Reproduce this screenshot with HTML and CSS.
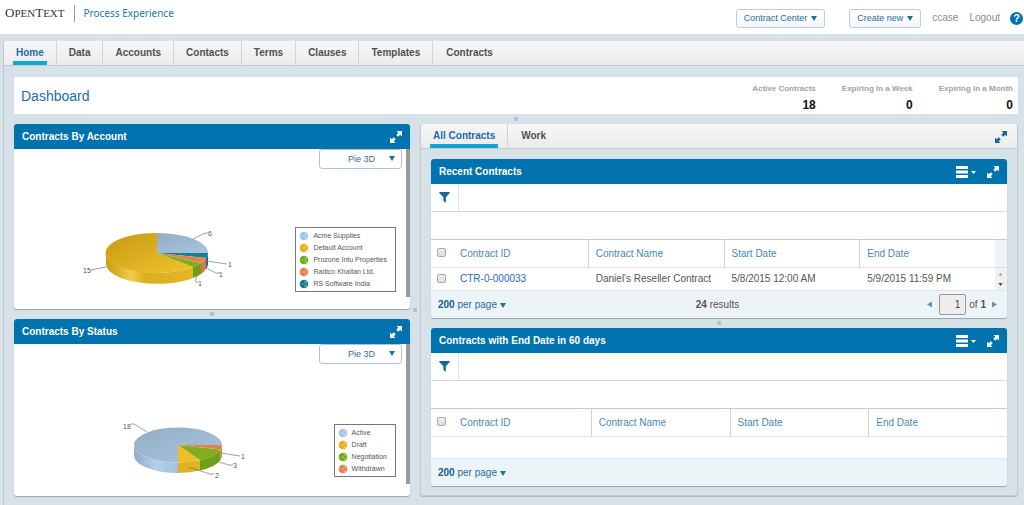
FILE: index.html
```html
<!DOCTYPE html>
<html lang="en">
<head>
<meta charset="utf-8">
<title>Process Experience - Dashboard</title>
<link rel="stylesheet" href="styles.css">
</head>
<body>
<svg class="defs" width="0" height="0" aria-hidden="true">
  <symbol id="expand" viewBox="0 0 12 12"><path d="M6.5 0H12V5.500L10.200 3.700L8.200 5.700L6.300 3.800L8.300 1.800ZM0 6.500L1.800 8.300L3.800 6.300L5.700 8.200L3.700 10.200L5.500 12H0Z" fill="currentColor"/></symbol>
  <symbol id="funnel" viewBox="0 0 12 12"><path d="M.3 0H11.700V1.200L7.500 5.800V11.600L4.800 9.800V5.800L.3 1.200Z" fill="currentColor"/></symbol>
  <symbol id="menu" viewBox="0 0 22 12"><path d="M0 0h12v3H0zM0 4.500h12v3H0zM0 9h12v3H0zM15 5h5l-2.500 3z" fill="currentColor"/></symbol>
  <symbol id="down" viewBox="0 0 6 5"><path d="M0 0h6L3 5z" fill="currentColor"/></symbol>
  <symbol id="dot" viewBox="0 0 10 10"><circle cx="5" cy="5" r="4.300" fill="currentColor"/><path d="M1.500 5h3.500M5 5L7.500 2M5 5l2.500 3M5 2a3 3 0 0 1 0 6" fill="none" stroke="#fff" stroke-width=".6" opacity=".5"/></symbol>
</svg>

<header class="topbar">
  <div class="logo">O<span>PEN</span>T<span>EXT</span></div>
  <div class="product">Process Experience</div>
  <div class="actions">
    <button class="pill" type="button">Contract Center <svg class="tri"><use href="#down"/></svg></button>
    <button class="pill pill-new" type="button">Create new <svg class="tri"><use href="#down"/></svg></button>
    <a href="#">ccase</a>
    <a href="#">Logout</a>
    <button class="help" type="button" aria-label="Help">?</button>
  </div>
</header>

<div class="frame">
  <nav class="tabs">
    <a class="active" href="#">Home</a><a href="#">Data</a><a href="#">Accounts</a><a href="#">Contacts</a><a href="#">Terms</a><a href="#">Clauses</a><a href="#">Templates</a><a href="#">Contracts</a>
  </nav>
  <main class="content">
    <section class="summary">
      <h1>Dashboard</h1>
      <dl>
        <div><dt>Active Contracts</dt><dd>18</dd></div>
        <div><dt>Expiring In a Week</dt><dd>0</dd></div>
        <div><dt>Expiring In a Month</dt><dd>0</dd></div>
      </dl>
    </section>
    <div class="split"></div>
    <div class="columns">
      <div class="charts">
        <section class="card">
          <header class="card-head"><h2>Contracts By Account</h2><button class="icon" type="button" aria-label="Expand"><svg><use href="#expand"/></svg></button></header>
          <div class="chart-body">
            <div class="chart-main">
              <div class="pick"><select aria-label="Chart type"><option>Pie 3D</option></select><svg class="tri"><use href="#down"/></svg></div>
              <div class="chart account">
                <svg class="pie-account" viewBox="80 222 170 74" role="img" aria-label="Contracts by account">
                  <defs>
                    <linearGradient id="goldSide"><stop offset="0" stop-color="#c99c16"/><stop offset=".3" stop-color="#f3cb48"/><stop offset=".45" stop-color="#d9ae20"/><stop offset="1" stop-color="#e3b722"/></linearGradient>
                    <linearGradient id="goldTop" x1="0" y1="0" x2="1" y2="1"><stop offset="0" stop-color="#c79915"/><stop offset="1" stop-color="#f0c42c"/></linearGradient>
                    <linearGradient id="blueTop" x1="0" y1="0" x2="1" y2="1"><stop offset="0" stop-color="#93adc7"/><stop offset="1" stop-color="#a9c4dd"/></linearGradient>
                    <linearGradient id="blueSide"><stop offset="0" stop-color="#8eabc5"/><stop offset=".5" stop-color="#b4d0e9"/><stop offset="1" stop-color="#a3c1dc"/></linearGradient>
                  </defs>
                  <path d="M106 253A51 20 0 0 0 193 267V278A51 20 0 0 1 106 264Z" fill="url(#goldSide)"/>
                  <path d="M193 267A51 20 0 0 0 201 263V274A51 20 0 0 1 193 278Z" fill="#6f9f14"/>
                  <path d="M201 263A51 20 0 0 0 206 258V269A51 20 0 0 1 201 274Z" fill="#d57b49"/>
                  <path d="M206 258A51 20 0 0 0 208 253V264A51 20 0 0 1 206 269Z" fill="#12717a"/>
                  <path d="M157 253V233A51 20 0 1 0 193 267Z" fill="url(#goldTop)"/>
                  <path d="M157 253V233A51 20 0 0 1 208 253Z" fill="url(#blueTop)"/>
                  <path d="M157 253H208A51 20 0 0 1 206 258Z" fill="#198088"/>
                  <path d="M157 253L206 258A51 20 0 0 1 201 263Z" fill="#dc8350"/>
                  <path d="M157 253L201 263A51 20 0 0 1 193 267Z" fill="#83ad1c"/>
                  <path d="M193 239L205 233H208M207 261L227 264M206 268L216 273H220M197 276L195 281L198 283M106 267L91 270" class="lead"/>
                  <text x="208" y="236">6</text><text x="228" y="267">1</text><text x="219" y="277">1</text><text x="198" y="286">1</text><text x="83" y="273">15</text>
                </svg>
                <ul class="legend">
                  <li><svg class="c-blue"><use href="#dot"/></svg>Acme Supplies</li>
                  <li><svg class="c-gold"><use href="#dot"/></svg>Default Account</li>
                  <li><svg class="c-green"><use href="#dot"/></svg>Prozone Intu Properties</li>
                  <li><svg class="c-orange"><use href="#dot"/></svg>Radico Khaitan Ltd.</li>
                  <li><svg class="c-teal"><use href="#dot"/></svg>RS Software India</li>
                </ul>
              </div>
            </div>
            <div class="rail"></div>
          </div>
        </section>
        <div class="split"></div>
        <section class="card">
          <header class="card-head"><h2>Contracts By Status</h2><button class="icon" type="button" aria-label="Expand"><svg><use href="#expand"/></svg></button></header>
          <div class="chart-body">
            <div class="chart-main">
              <div class="pick"><select aria-label="Chart type"><option>Pie 3D</option></select><svg class="tri"><use href="#down"/></svg></div>
              <div class="chart status">
                <svg class="pie-status" viewBox="100 413 160 75" role="img" aria-label="Contracts by status">
                  <path d="M134 445A44 17.500 0 0 0 178 462.500V473A44 17.500 0 0 1 134 455.500Z" fill="url(#blueSide)"/>
                  <path d="M178 462.500A44 17.500 0 0 0 200 460V470.500A44 17.500 0 0 1 178 473Z" fill="#e0b226"/>
                  <path d="M200 460A44 17.500 0 0 0 220.500 449.500V460A44 17.500 0 0 1 200 470.500Z" fill="#6f9f14"/>
                  <path d="M220.500 449.500A44 17.500 0 0 0 222 445V455.500A44 17.500 0 0 1 220.500 460Z" fill="#d57b49"/>
                  <path d="M178 445H222A44 17.500 0 1 0 178 462.500Z" fill="url(#blueTop)"/>
                  <path d="M178 445V462.500A44 17.500 0 0 0 200 460Z" fill="#f0be2d"/>
                  <path d="M178 445L200 460A44 17.500 0 0 0 220.500 449.500Z" fill="#83ad1c"/>
                  <path d="M178 445H222A44 17.500 0 0 1 220.500 449.500Z" fill="#df8450"/>
                  <path d="M131 424H134L147 432M221 453L240 456M219 462L229 465H233M188 467L210 474H214" class="lead"/>
                  <text x="123" y="429">18</text><text x="241" y="459">1</text><text x="233" y="468">3</text><text x="215" y="478">2</text>
                </svg>
                <ul class="legend">
                  <li><svg class="c-blue"><use href="#dot"/></svg>Active</li>
                  <li><svg class="c-gold"><use href="#dot"/></svg>Draft</li>
                  <li><svg class="c-green"><use href="#dot"/></svg>Negotiation</li>
                  <li><svg class="c-orange"><use href="#dot"/></svg>Withdrawn</li>
                </ul>
              </div>
            </div>
            <div class="rail"></div>
          </div>
        </section>
      </div>

      <div class="split split-v"></div>

      <section class="panel">
        <div class="tabs panel-tabs">
          <a class="active" href="#">All Contracts</a><a href="#">Work</a>
          <button class="icon" type="button" aria-label="Expand"><svg><use href="#expand"/></svg></button>
        </div>
        <div class="panel-body">
          <section class="card">
            <header class="card-head"><h2>Recent Contracts</h2><button class="icon menu" type="button" aria-label="Menu"><svg><use href="#menu"/></svg></button><button class="icon" type="button" aria-label="Expand"><svg><use href="#expand"/></svg></button></header>
            <div class="filter"><button class="icon" type="button" aria-label="Filter"><svg><use href="#funnel"/></svg></button></div>
            <div class="blank"></div>
            <table>
              <colgroup><col class="col-check"><col><col><col><col><col class="col-scroll"></colgroup>
              <thead><tr><th><input type="checkbox" aria-label="Select all"></th><th>Contract ID</th><th>Contract Name</th><th>Start Date</th><th>End Date</th><th class="scroll-top"></th></tr></thead>
              <tbody><tr><td><input type="checkbox" aria-label="Select CTR-0-000033"></td><td><a href="#">CTR-0-000033</a></td><td>Daniel's Reseller Contract</td><td>5/8/2015 12:00 AM</td><td>5/9/2015 11:59 PM</td><td class="scroller"><svg viewBox="0 0 11 20"><path d="M3.500 6.500h4L5.500 4z" fill="#999"/><path d="M3.500 14h4L5.500 17z" fill="#444"/></svg></td></tr></tbody>
            </table>
            <footer class="pager">
              <button class="per-page" type="button"><b>200</b> per page <svg class="tri"><use href="#down"/></svg></button>
              <span class="count"><b>24</b> results</span>
              <span class="pages">
                <button class="arrow" type="button" aria-label="Previous page"><svg viewBox="0 0 5 6"><path d="M5 0v6L0 3z" fill="currentColor"/></svg></button>
                <input type="text" value="1" aria-label="Page"><span>of <b>1</b></span>
                <button class="arrow" type="button" aria-label="Next page"><svg viewBox="0 0 5 6"><path d="M0 0v6L5 3z" fill="currentColor"/></svg></button>
              </span>
            </footer>
          </section>
          <div class="split"></div>
          <section class="card">
            <header class="card-head"><h2>Contracts with End Date in 60 days</h2><button class="icon menu" type="button" aria-label="Menu"><svg><use href="#menu"/></svg></button><button class="icon" type="button" aria-label="Expand"><svg><use href="#expand"/></svg></button></header>
            <div class="filter"><button class="icon" type="button" aria-label="Filter"><svg><use href="#funnel"/></svg></button></div>
            <div class="blank"></div>
            <table class="empty">
              <colgroup><col class="col-check"><col><col><col><col></colgroup>
              <thead><tr><th><input type="checkbox" aria-label="Select all"></th><th>Contract ID</th><th>Contract Name</th><th>Start Date</th><th>End Date</th></tr></thead>
              <tbody><tr><td colspan="5"></td></tr></tbody>
            </table>
            <footer class="pager">
              <button class="per-page" type="button"><b>200</b> per page <svg class="tri"><use href="#down"/></svg></button>
            </footer>
          </section>
        </div>
      </section>
    </div>
  </main>
</div>
</body>
</html>
```

FILE: styles.css
```css
* { box-sizing: border-box; }
body {
  margin: 0;
  background: #d7e1e8;
  color: #555;
  font: 10px/12px "Liberation Sans", Arial, sans-serif;
  overflow-x: hidden;
}
h1, h2, dl, dd, ul { margin: 0; padding: 0; }
a { text-decoration: none; color: inherit; }
button, input, select { font: inherit; margin: 0; }
button { background: none; border: 0; padding: 0; color: inherit; cursor: pointer; }
.defs { display: none; }
.tri { width: 6px; height: 5px; color: #1a6fa3; }

/* Top bar */
.topbar { display: flex; align-items: center; height: 34px; padding: 0 1px 0 5px; background: #fff; }
.logo { padding-bottom: 8px; color: #333; font: 13px/16px "Liberation Serif", serif; }
.logo span { font-size: 11px; }
.product {
  margin: 0 auto 8px 9px; padding-left: 9px; border-left: 1px solid #999;
  color: #1a78ac; font: 10px/17px "Noto Sans", sans-serif;
}
.actions { display: flex; align-items: center; padding-top: 2px; color: #8c8c8c; }
.actions a { margin-left: 11px; }
.pill {
  display: flex; align-items: center; gap: 4px; height: 19px; padding: 0 7px;
  border: 1px solid #c0cdd8; border-radius: 3px;
  background: linear-gradient(#fff, #f4f7f9);
  color: #2a6d9c; font-size: 9px;
}
.pill-new { margin-left: 24px; }
.help {
  width: 13px; height: 13px; margin-left: 10px; border-radius: 50%;
  background: #0072ac; color: #fff; font-weight: bold; font-size: 11px; line-height: 13px;
}

/* Frame and tabs */
.frame { margin: 7px 0 0 3px; border-left: 1px solid #bcc8d1; border-top-left-radius: 4px; }
.tabs {
  display: flex; height: 25px; background: linear-gradient(#f7f7f7, #ebebec);
  border-bottom: 1px solid #c3cbd2; border-top-left-radius: 3px;
  color: #505050; font-weight: bold; line-height: 23px;
}
.tabs a { position: relative; padding: 0 12px; border-left: 1px solid #cfd3d7; }
.tabs a:first-child { border-left: 0; }
.tabs a:last-of-type { padding-left: 13px; }
.tabs .active { color: #1c6c9f; }
.tabs .active::after {
  content: ""; position: absolute; left: 9px; right: 9px; bottom: 0; height: 4px; background: #12a5d3;
}
.content { padding: 11px 6px 9px 10px; }

/* Summary */
.summary {
  display: flex; justify-content: space-between; align-items: center;
  height: 37px; padding: 0 5px 0 7px; background: #fff;
}
.summary h1 { color: #1c6c9f; font-weight: normal; font-size: 14px; line-height: 18px; }
.summary dl { display: flex; gap: 26px; text-align: right; font-weight: bold; padding-top: 6px; }
.summary dt { color: #a2a2a2; font-size: 8px; }
.summary dd { color: #111; font-size: 12px; line-height: 20px; }

.split { display: flex; justify-content: center; align-items: center; height: 10px; }
.split::after { content: ""; width: 4px; height: 4px; background: #b3c1cc; border-radius: 1px; }
.split-v { height: auto; }
.columns { display: grid; grid-template-columns: 396fr 10px 598fr; }
.charts { display: grid; grid-template-rows: 185fr 10px 177fr; }

/* Cards */
.card {
  display: flex; flex-direction: column; min-width: 0; background: #fff;
  border-radius: 3px; box-shadow: 0 1px 1px #95a4af;
}
.card-head {
  display: flex; align-items: center; height: 25px; padding: 0 8px;
  background: #0072ad; color: #fff; border-radius: 3px 3px 0 0;
}
.card-head h2 { flex: 1; font-size: 10px; line-height: 12px; }
.icon { display: flex; width: 12px; height: 12px; color: #13689e; }
.icon svg { width: 100%; height: 100%; }
.card-head .icon { color: #fff; }
.card-head .menu { width: 22px; margin-right: 9px; }

.chart-body { display: flex; flex: 1; }
.chart-main { flex: 1; display: flex; flex-direction: column; }
.rail { width: 4px; margin-bottom: 12px; background: #999; }
.pick { position: relative; align-self: flex-end; width: 83px; margin-right: 4px; }
.pick select {
  appearance: none; display: block; width: 100%; height: 20px; padding: 0 0 0 28px;
  border: 1px solid #afc3d4; border-radius: 3px; background: #fff; color: #2d70a3; font-size: 9px;
}
.pick .tri { position: absolute; right: 7px; top: 7px; pointer-events: none; }
.chart {
  display: flex; align-items: center; justify-content: space-between;
  margin-top: auto; padding-right: 10px;
}
.account { padding-left: 66px; padding-bottom: 13px; }
.status { padding-left: 86px; padding-bottom: 8px; }
.pie-account { width: 170px; height: 74px; }
.pie-status { width: 160px; height: 75px; }
.lead { fill: none; stroke: #777; stroke-width: .7; }
.chart text { font-size: 7px; fill: #555; }
.legend { padding: 2px 8px 1px 3px; border: 1px solid #777; list-style: none; font-size: 7px; white-space: nowrap; }
.legend li { display: flex; align-items: center; gap: 4px; }
.legend svg { width: 10px; height: 10px; }
.c-blue { color: #a1c2e6; }
.c-gold { color: #eba914; }
.c-green { color: #6fa70e; }
.c-orange { color: #ec7840; }
.c-teal { color: #087880; }

/* Contract lists */
.panel { min-width: 0; border: 1px solid #bfcad3; border-top: 0; border-radius: 3px; box-shadow: 0 1px 1px #a8b4be; }
.panel-tabs { border-top-right-radius: 3px; padding-right: 10px; }
.panel-tabs .icon { margin: 7px 0 0 auto; }
.panel-body { padding: 10px 10px 9px; }
.filter { display: flex; height: 28px; border-bottom: 1px solid #d5dadd; }
.filter .icon { width: 28px; height: 27px; padding: 8px; border-right: 1px solid #dce2e6; }
.blank { height: 27px; }
table { width: 100%; table-layout: fixed; border-collapse: separate; border-spacing: 0; }
.col-check { width: 21px; }
.col-scroll { width: 12px; }
th {
  height: 29px; padding: 0 7px; border-top: 1px solid #c5cbd0; border-bottom: 1px solid #dce1e4;
  text-align: left; font-weight: normal; color: #4788b5;
}
th + th + th { border-left: 1px solid #ccd2d6; }
td { height: 22px; padding: 0 8px; white-space: nowrap; }
.empty td { height: 21px; }
th:nth-child(2) { padding-left: 8px; }
th:first-child, td:first-child { padding: 0 0 0 6px; }
td a { color: #2868c8; }
th.scroll-top { padding: 0; border-left: 0; background: #eef5f8; }
.scroller { padding: 0; background: #f1f1f1; }
.scroller svg { display: block; width: 11px; height: 20px; }
input[type="checkbox"] {
  appearance: none; display: block; width: 9px; height: 9px; margin-bottom: 2px;
  border: 1px solid #a9a9a9; border-radius: 2px; background: linear-gradient(#eee, #ddd);
}
.pager {
  display: grid; grid-template-columns: 1fr auto 1fr; align-items: center; height: 28px; padding: 0 10px 0 7px;
  background: #edf4f8; border-top: 1px solid #dfe7ec; border-radius: 0 0 3px 3px;
}
.per-page { justify-self: start; color: #2b6b99; }
.per-page b { color: #17608f; }
.pager b { font-weight: bold; }
.pages { display: flex; justify-self: end; align-items: center; gap: 3px; }
.pages input {
  width: 27px; height: 21px; margin-left: 4px; padding: 0 5px; border: 1px solid #999; border-radius: 2px;
  background: #eee; color: #444; text-align: right;
}
.arrow { color: #5f93b5; display: flex; margin-left: 3px; }
.arrow svg { width: 5px; height: 7px; }
```
